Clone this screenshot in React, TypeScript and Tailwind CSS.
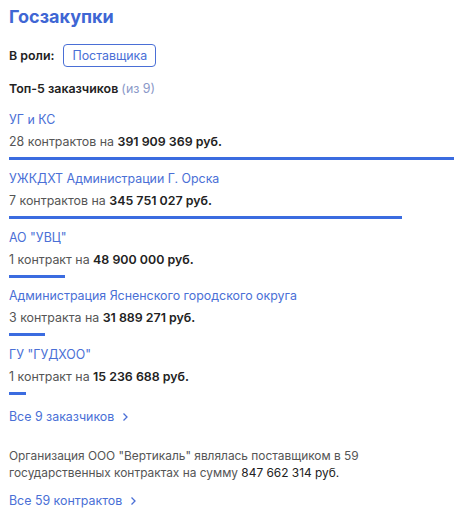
import React from "react";

const customers = [
  { name: "УГ и КС", count: "28 контрактов", sum: 391909369 },
  { name: "УЖКДХТ Администрации Г. Орска", count: "7 контрактов", sum: 345751027 },
  { name: "АО \"УВЦ\"", count: "1 контракт", sum: 48900000 },
  { name: "Администрация Ясненского городского округа", count: "3 контракта", sum: 31889271 },
  { name: "ГУ \"ГУДХОО\"", count: "1 контракт", sum: 15236688 },
];

const fmt = (n: number) => n.toLocaleString("ru-RU").replace(/\s/g, " ");

function Chevron() {
  return (
    <svg width="8" height="10" viewBox="0 0 8 10" className="ml-[7px] inline-block">
      <path d="M2.5 1.5 L6 5 L2.5 8.5" fill="none" stroke="currentColor" strokeWidth="1.3" />
    </svg>
  );
}

export default function App() {
  const max = customers[0].sum;
  return (
    <div className="w-[463px] h-[514px] bg-white px-[9px] pt-[5px] text-[12.4px] leading-4 text-[#555] font-['Inter',sans-serif]">
      <h2 className="text-[18px] leading-6 font-bold text-[#3f66d4]">Госзакупки</h2>
      <div className="flex items-center mt-[15px]">
        <span className="font-semibold text-[#222]">В роли:</span>
        <span className="ml-[9px] h-[23px] px-[8px] flex items-center border border-[#4a6fd6] rounded-[4px] text-[#4a6fd6]">
          Поставщика
        </span>
      </div>
      <div className="mt-[14px] font-semibold text-[#222]">
        Топ-5 заказчиков <span className="font-normal text-[#8a98c8]">(из 9)</span>
      </div>
      <div className="mt-[15px] flex flex-col">
        {customers.map((c) => (
          <div key={c.name} className="flex flex-col mb-[10.75px]">
            <div className="text-[#4a6fd6]">{c.name}</div>
            <div className="mt-[6px]">
              {c.count} на <span className="font-semibold text-[#222]">{fmt(c.sum)} руб.</span>
            </div>
            <div
              className="mt-[7px] h-[3px] bg-[#3b6ce0]"
              style={{ width: `${(c.sum / max) * 100}%` }}
            />
          </div>
        ))}
      </div>
      <div className="mt-[3px] flex items-center text-[#4a6fd6]">
        Все 9 заказчиков
        <Chevron />
      </div>
      <p className="mt-[22px] leading-[17px] text-[11.9px]">
        Организация ООО "Вертикаль" являлась поставщиком в 59
        <br />
        государственных контрактах на сумму <span className="text-[#222]">847 662 314 руб.</span>
      </p>
      <div className="mt-[12px] flex items-center text-[#4a6fd6]">
        Все 59 контрактов
        <Chevron />
      </div>
    </div>
  );
}
